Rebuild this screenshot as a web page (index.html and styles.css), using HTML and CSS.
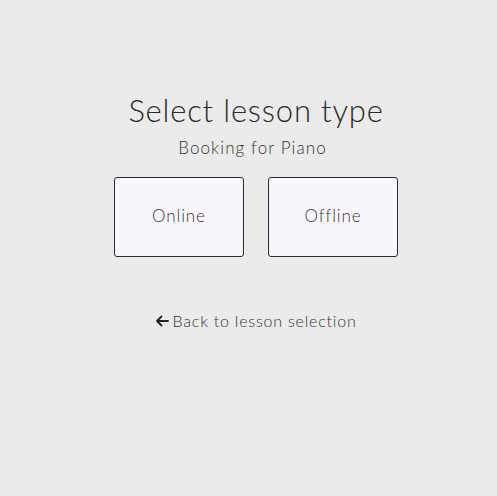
FILE: index.html
```html
<!DOCTYPE html>
<html>
<head>
<meta charset="utf-8">
<link rel="stylesheet" href="styles.css">
</head>
<body>
<main class="page">
  <h1 class="title">Select lesson type</h1>
  <p class="subtitle">Booking for Piano</p>
  <div class="options">
    <button class="option">Online</button>
    <button class="option">Offline</button>
  </div>
  <a class="back" href="#"><svg class="arrow" width="14" height="12" viewBox="0 0 14 12"><path d="M13 6H2M6.5 1.5L2 6l4.5 4.5" fill="none" stroke="#222" stroke-width="1.8" stroke-linecap="round" stroke-linejoin="round"/></svg>Back to lesson selection</a>
</main>
</body>
</html>
```
FILE: styles.css
```css
html, body {
  margin: 0;
  padding: 0;
  background: #ebebeb;
}
body {
  font-family: "Lato", "Open Sans", sans-serif;
  color: #333;
  min-height: 496px;
}
.page {
  display: flex;
  flex-direction: column;
  align-items: center;
  padding: 92px 0 0 15px;
}
.title {
  margin: 0;
  font-size: 31px;
  font-weight: 300;
  line-height: 36px;
  letter-spacing: 0.8px;
  color: #2a2a2a;
}
.subtitle {
  margin: 10px 7px 0 0;
  font-size: 17px;
  font-weight: 300;
  line-height: 20px;
  letter-spacing: 1.1px;
  color: #333;
}
.options {
  display: flex;
  gap: 24px;
  margin-top: 19px;
}
.option {
  width: 130px;
  height: 80px;
  box-sizing: border-box;
  border: 1px solid #2b2b2b;
  border-radius: 3px;
  background: #f9f7fd;
  font-family: inherit;
  font-size: 17px;
  font-weight: 300;
  letter-spacing: 0.9px;
  color: #333;
  padding: 0 0 3px;
}
.back {
  display: flex;
  align-items: center;
  gap: 3px;
  margin-top: 54px;
  font-size: 16px;
  font-weight: 300;
  letter-spacing: 0.8px;
  line-height: 20px;
  color: #333;
  text-decoration: none;
}
.arrow {
  display: block;
}
```
